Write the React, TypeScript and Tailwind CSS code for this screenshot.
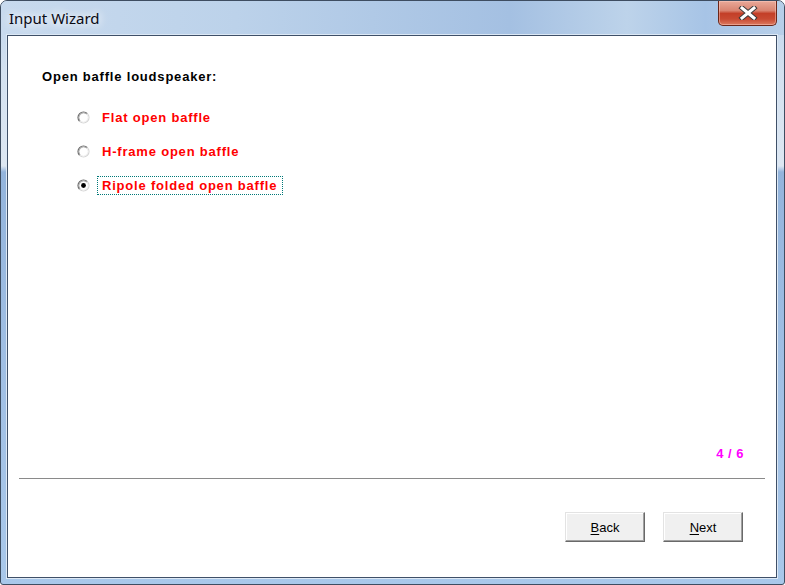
import { ReactNode } from 'react';

const OPTIONS = [
    { label: 'Flat open baffle', checked: false },
    { label: 'H-frame open baffle', checked: false },
    { label: 'Ripole folded open baffle', checked: true },
];

const Radio = ({ checked }: { checked?: boolean }) => (
    <svg width="13" height="13" viewBox="0 0 13 13" className="shrink-0">
        <circle cx="6.5" cy="6.5" r="5.5" fill="#fff" />
        <path d="M2.61 10.39A5.5 5.5 0 0 1 10.39 2.61" fill="none" stroke="#6a6a6a" strokeWidth="1.2" />
        <path d="M10.39 2.61A5.5 5.5 0 0 1 2.61 10.39" fill="none" stroke="#d6d6d6" strokeWidth="1.2" />
        <path d="M3.32 9.68A4.5 4.5 0 0 1 9.68 3.32" fill="none" stroke="#a8a8a8" />
        <path d="M9.68 3.32A4.5 4.5 0 0 1 3.32 9.68" fill="none" stroke="#efefef" />
        {checked && <circle cx="6.5" cy="6.5" r="2.4" fill="#000" />}
    </svg>
);

const WinButton = ({ children }: { children: ReactNode }) => (
    <button className="w-[80px] h-[30px] bg-[#f0f0f0] border border-t-[#e3e3e3] border-l-[#e3e3e3] border-b-[#696969] border-r-[#696969] [box-shadow:inset_-1px_-1px_0_#a0a0a0,inset_1px_1px_0_#fff] text-[13px] text-black font-['Liberation_Sans',Arial,sans-serif] leading-none">
        {children}
    </button>
);

const CloseButton = () => (
    <div className="w-[59px] h-[25px] mr-[7px] rounded-b-[5px] border border-t-0 border-[#6b2619] bg-[linear-gradient(180deg,#e9a999_0%,#d98471_40%,#c33f28_52%,#c84a32_75%,#dc7a5f_100%)] [box-shadow:inset_0_0_0_1px_rgba(255,210,200,0.45)] flex items-center justify-center">
        <svg width="20" height="14" viewBox="0 0 20 14">
            <path d="M4 2L16 12M16 2L4 12" stroke="#3b3b3b" strokeWidth="5" strokeLinecap="square" />
            <path d="M4 2L16 12M16 2L4 12" stroke="#fff" strokeWidth="3" strokeLinecap="square" />
        </svg>
    </div>
);

export default function App() {
    return (
        <div className="w-[785px] h-[585px] flex flex-col border border-[#3e4d61] rounded-t-[7px] rounded-b-[3px] overflow-hidden bg-[linear-gradient(180deg,#bfd4ec_0px,#d3e1f0_70px,#dde7f2_165px,#93b4dc_171px,#a0bfe4_360px,#a9c8ea_585px)]">
            <div className="h-[34px] flex items-start justify-between bg-[linear-gradient(90deg,#c8daee_0%,#bcd2ea_30%,#a4c0e2_65%,#bdd3ea_80%,#a7c4e6_90%,#b7cfe9_100%)]">
                <span className="pl-[8px] pt-[7px] text-[15px] leading-[20px] text-[#0a0a14] font-['Noto_Sans',sans-serif] [text-shadow:0_0_8px_#fff,0_0_12px_#fff]">
                    Input Wizard
                </span>
                <CloseButton />
            </div>

            <div className="flex-1 flex px-[6px] pb-[6px] pr-[7px]">
                <div className="flex-1 flex flex-col bg-white border border-[#3f5068] [box-shadow:0_0_0_1px_#dce8f5] font-['Liberation_Sans',Arial,sans-serif]">
                    <h1 className="mt-[33px] pl-[34px] text-[13px] leading-[16px] tracking-[0.8px] font-bold text-black">
                        Open baffle loudspeaker:
                    </h1>

                    <div className="mt-[23px] pl-[69px] flex flex-col gap-[15px]">
                        {OPTIONS.map((item) => (
                            <div key={item.label} className="flex items-center h-[19px] gap-[7px]">
                                <Radio checked={item.checked} />
                                <span
                                    className={`h-[19px] pl-[4px] pr-[5px] border leading-[17px] text-[13px] tracking-[0.8px] font-bold text-[#ff0000] ${item.checked ? 'border-dotted border-[#007878]' : 'border-transparent'}`}
                                >
                                    {item.label}
                                </span>
                            </div>
                        ))}
                    </div>

                    <div className="flex-1" />

                    <div className="pr-[32px] text-right text-[13px] leading-[16px] tracking-[0.5px] font-bold text-[#ff00ff]">
                        4 / 6
                    </div>

                    <div className="mt-[16px] mx-[11px] h-px bg-[#8a8a8a]" />

                    <div className="mt-[33px] mb-[35px] pr-[33px] flex justify-end gap-[18px]">
                        <WinButton>
                            <span className="underline underline-offset-2">B</span>ack
                        </WinButton>
                        <WinButton>
                            <span className="underline underline-offset-2">N</span>ext
                        </WinButton>
                    </div>
                </div>
            </div>
        </div>
    );
}
